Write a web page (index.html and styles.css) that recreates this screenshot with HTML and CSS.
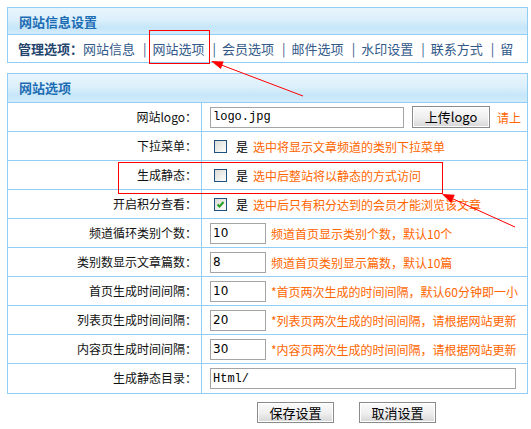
FILE: index.html
```html
<!DOCTYPE html>
<html lang="zh-CN">
<head>
  <meta charset="UTF-8" />
  <title>网站信息设置</title>
  <link rel="stylesheet" href="styles.css">
</head>
<body>
  <div class="panel">
    <div class="panel-head">网站信息设置</div>
    <div class="nav">
      <b>管理选项：</b><a>网站信息</a><span class="sep">|</span><a>网站选项</a><span class="sep">|</span><a>会员选项</a><span class="sep">|</span><a>邮件选项</a><span class="sep">|</span><a>水印设置</a><span class="sep">|</span><a>联系方式</a><span class="sep">|</span><a>留</a>
    </div>
  </div>

  <div class="panel panel-form">
    <div class="panel-head panel-head-tall">网站选项</div>
    <div class="row">
      <div class="label">网站logo：</div>
      <div class="value"><input class="txt txt-logo" type="text" value="logo.jpg"><button class="btn btn-upload">上传logo</button><span class="note note-wide">请上</span></div>
    </div>
    <div class="row">
      <div class="label">下拉菜单：</div>
      <div class="value"><span class="chk"></span><span class="yes">是</span><span class="note">选中将显示文章频道的类别下拉菜单</span></div>
    </div>
    <div class="row">
      <div class="label">生成静态：</div>
      <div class="value"><span class="chk"></span><span class="yes">是</span><span class="note">选中后整站将以静态的方式访问</span></div>
    </div>
    <div class="row">
      <div class="label">开启积分查看：</div>
      <div class="value"><span class="chk"><svg width="11" height="11" viewBox="0 0 11 11"><path d="M2.5 5.5 L4.5 7.5 L8.5 3" fill="none" stroke="#21a121" stroke-width="2"/></svg></span><span class="yes">是</span><span class="note">选中后只有积分达到的会员才能浏览该文章</span></div>
    </div>
    <div class="row">
      <div class="label">频道循环类别个数：</div>
      <div class="value"><input class="txt txt-num" type="text" value="10"><span class="note">频道首页显示类别个数，默认10个</span></div>
    </div>
    <div class="row">
      <div class="label">类别数显示文章篇数：</div>
      <div class="value"><input class="txt txt-num" type="text" value="8"><span class="note">频道首页类别显示篇数，默认10篇</span></div>
    </div>
    <div class="row">
      <div class="label">首页生成时间间隔：</div>
      <div class="value"><input class="txt txt-num" type="text" value="10"><span class="note">*首页两次生成的时间间隔，默认60分钟即一小</span></div>
    </div>
    <div class="row">
      <div class="label">列表页生成时间间隔：</div>
      <div class="value"><input class="txt txt-num" type="text" value="20"><span class="note">*列表页两次生成的时间间隔，请根据网站更新</span></div>
    </div>
    <div class="row">
      <div class="label">内容页生成时间间隔：</div>
      <div class="value"><input class="txt txt-num" type="text" value="30"><span class="note">*内容页两次生成的时间间隔，请根据网站更新</span></div>
    </div>
    <div class="row">
      <div class="label">生成静态目录：</div>
      <div class="value"><input class="txt txt-dir" type="text" value="Html/"></div>
    </div>
  </div>

  <div class="actions">
    <button class="btn btn-action">保存设置</button>
    <button class="btn btn-action">取消设置</button>
  </div>

  <!-- red markup drawn on top of the form -->
  <svg class="marks" width="531" height="429" viewBox="0 0 531 429">
    <rect x="149.5" y="30.5" width="60" height="33" fill="none" stroke="#f00" stroke-width="1"/>
    <line x1="303" y1="96" x2="220" y2="64.5" stroke="#f00" stroke-width="1"/>
    <polygon points="211,61 223.6,61.5 220.8,69" fill="#f00"/>
    <rect x="118.5" y="162.5" width="324" height="31" fill="none" stroke="#f00" stroke-width="1"/>
    <line x1="515" y1="227" x2="451" y2="198" stroke="#f00" stroke-width="1"/>
    <polygon points="442,194 454.8,194.8 451.1,203" fill="#f00"/>
  </svg>
</body>
</html>
```

FILE: styles.css
```css
* { box-sizing: border-box; }
body { margin: 0; padding: 7px 0 0 7px; background: #fff; font-family: "Noto Sans CJK SC", sans-serif; font-size: 12px; color: #111; position: relative; }

.panel { width: 521px; border: 1px solid #92cdf3; }
.panel-form { margin-top: 10px; }
.panel-head { height: 27px; line-height: 27px; padding-left: 11px; font-size: 13px; font-weight: bold; color: #1d6db4; border-bottom: 1px solid #92cdf3; background: linear-gradient(to bottom, #e9f5fd 0%, #dcf0fb 45%, #c6e6f9 75%, #d3ecfb 100%); }
.panel-head-tall { height: 29px; line-height: 28px; }

.nav { height: 27px; line-height: 27px; padding-left: 10px; font-size: 13px; color: #33598a; white-space: nowrap; overflow: hidden; }
.nav b { color: #24456e; }
.nav a { color: #33598a; }
.sep { padding: 0 6px 0 8px; }

.row { display: flex; height: 29px; border-bottom: 1px solid #92cdf3; }
.row:last-child { border-bottom: none; height: 29px; }
.label { width: 194px; flex: none; border-right: 1px solid #92cdf3; text-align: right; padding-right: 4px; line-height: 28px; color: #111; }
.value { flex: 1; display: flex; align-items: center; padding-left: 8px; white-space: nowrap; overflow: hidden; }

.txt { height: 21px; border: 1px solid #a4a4a4; padding: 0 2px; font-family: "Liberation Mono", monospace; font-size: 12px; color: #000; background: #fff; outline: none; }
.txt-logo { width: 194px; }
.txt-num { width: 56px; font-family: "DejaVu Sans", sans-serif; font-size: 12px; }
.txt-dir { width: 306px; }

.note { color: #ff6600; margin-left: 5px; }
.note-wide { margin-left: 7px; }

.chk { width: 13px; height: 13px; margin-left: 4px; border: 1px solid #1c5180; background: linear-gradient(135deg, #dcdcd6 0%, #f0f0ec 60%, #fff 100%); display: flex; align-items: center; justify-content: center; }
.yes { margin-left: 9px; color: #000; }

.btn { height: 22px; border: 1px solid #8a8a8a; box-shadow: inset 0 0 0 1px #fff; background: linear-gradient(to bottom, #fbfbfb 0%, #eeeeee 55%, #d6d6d6 100%); font-family: "Noto Sans CJK SC", sans-serif; font-size: 13px; color: #000; padding: 0; line-height: 18px; }
.btn-upload { width: 78px; margin-left: 8px; }
.btn-action { width: 77px; height: 21px; }

.actions { display: flex; gap: 25px; margin: 8px 0 0 250px; }

.marks { position: absolute; left: 0; top: 0; pointer-events: none; }
```
